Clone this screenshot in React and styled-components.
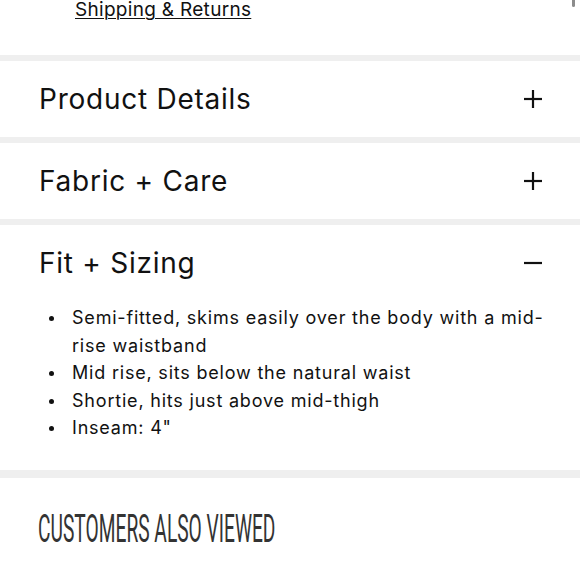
import React from "react"
import styled, { createGlobalStyle } from "styled-components"

const GlobalStyle = createGlobalStyle`
  html, body {
    margin: 0;
    padding: 0;
    background: #fff;
  }
  body {
    width: 580px;
    overflow: hidden;
    font-family: Inter, "Liberation Sans", sans-serif;
    color: #111;
  }
`

const Page = styled.div`
  position: relative;
  width: 580px;
  height: 580px;
  overflow: hidden;
`

const ScrollThumb = styled.div`
  position: absolute;
  top: -3px;
  right: 5px;
  width: 3px;
  height: 10px;
  border-radius: 2px;
  background: #8c8c8c;
`

const Top = styled.div`
  height: 55px;
  padding-left: 75px;
`

const ShipLink = styled.a`
  display: inline-block;
  margin-top: -6px;
  font-size: 19px;
  line-height: 24px;
  letter-spacing: 0.3px;
  color: #111;
  text-decoration: underline;
  text-underline-offset: 2px;
  text-decoration-thickness: 1px;
`

const Band = styled.div`
  height: ${p => p.h || 6}px;
  background: #efefef;
`

const Header = styled.div`
  height: 76px;
  display: flex;
  align-items: center;
  justify-content: space-between;
  padding: 0 38px 0 39px;
`

const Title = styled.h2`
  margin: 0;
  font-size: 28px;
  font-weight: 400;
  letter-spacing: 0.75px;
  color: #111;
`

const Body = styled.ul`
  margin: 0;
  padding: 3px 30px 28px 72px;
  list-style: none;
`

const Item = styled.li`
  position: relative;
  font-size: 18px;
  line-height: 27.5px;
  letter-spacing: 0.8px;
  color: #111;

  &::before {
    content: "";
    position: absolute;
    left: -23px;
    top: 12px;
    width: 5px;
    height: 5px;
    border-radius: 50%;
    background: #111;
  }
`

const Related = styled.div`
  padding: 31px 0 0 38px;
`

const RelatedTitle = styled.h2`
  margin: 0;
  display: inline-block;
  font-family: Roboto, "Liberation Sans", sans-serif;
  font-size: 38px;
  font-weight: 400;
  line-height: 40px;
  color: #333;
  transform: scaleX(0.505);
  transform-origin: left center;
  white-space: nowrap;
`

const Icon = ({ open }) => (
  <svg width="18" height="18" viewBox="0 0 18 18">
    <path d="M0 9H18" stroke="#111" strokeWidth="2.2" />
    {!open && <path d="M9 0V18" stroke="#111" strokeWidth="2.2" />}
  </svg>
)

const Section = ({ title, open, children }) => (
  <>
    <Header>
      <Title>{title}</Title>
      <Icon open={open} />
    </Header>
    {open && children}
  </>
)

const fit = [
  "Semi-fitted, skims easily over the body with a mid-rise waistband",
  "Mid rise, sits below the natural waist",
  "Shortie, hits just above mid-thigh",
  "Inseam: 4\"",
]

export default function App() {
  return (
    <Page>
      <GlobalStyle />
      <ScrollThumb />
      <Top>
        <ShipLink href="#">Shipping &amp; Returns</ShipLink>
      </Top>
      <Band />
      <Section title="Product Details" />
      <Band />
      <Section title="Fabric + Care" />
      <Band />
      <Section title="Fit + Sizing" open>
        <Body>
          {fit.map(t => <Item key={t}>{t}</Item>)}
        </Body>
      </Section>
      <Band h={8} />
      <Related>
        <RelatedTitle>CUSTOMERS ALSO VIEWED</RelatedTitle>
      </Related>
    </Page>
  )
}
